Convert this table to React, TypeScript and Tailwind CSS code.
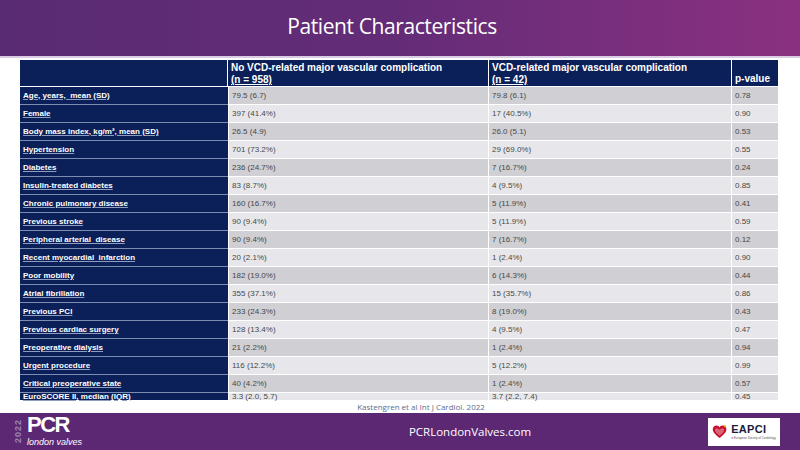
import React from "react";

type Row = { label: string; a: string; b: string; p: string };

const rows: Row[] = [
  { label: "Age, years,  mean (SD)", a: "79.5 (6.7)", b: "79.8 (6.1)", p: "0.78" },
  { label: "Female", a: "397 (41.4%)", b: "17 (40.5%)", p: "0.90" },
  { label: "Body mass index, kg/m², mean (SD)", a: "26.5 (4.9)", b: "26.0 (5.1)", p: "0.53" },
  { label: "Hypertension", a: "701 (73.2%)", b: "29 (69.0%)", p: "0.55" },
  { label: "Diabetes", a: "236 (24.7%)", b: "7 (16.7%)", p: "0.24" },
  { label: "Insulin-treated diabetes", a: "83 (8.7%)", b: "4 (9.5%)", p: "0.85" },
  { label: "Chronic pulmonary disease", a: "160 (16.7%)", b: "5 (11.9%)", p: "0.41" },
  { label: "Previous stroke", a: "90 (9.4%)", b: "5 (11.9%)", p: "0.59" },
  { label: "Peripheral arterial  disease", a: "90 (9.4%)", b: "7 (16.7%)", p: "0.12" },
  { label: "Recent myocardial  infarction", a: "20 (2.1%)", b: "1 (2.4%)", p: "0.90" },
  { label: "Poor mobility", a: "182 (19.0%)", b: "6 (14.3%)", p: "0.44" },
  { label: "Atrial fibrillation", a: "355 (37.1%)", b: "15 (35.7%)", p: "0.86" },
  { label: "Previous PCI", a: "233 (24.3%)", b: "8 (19.0%)", p: "0.43" },
  { label: "Previous cardiac surgery", a: "128 (13.4%)", b: "4 (9.5%)", p: "0.47" },
  { label: "Preoperative dialysis", a: "21 (2.2%)", b: "1 (2.4%)", p: "0.94" },
  { label: "Urgent procedure", a: "116 (12.2%)", b: "5 (12.2%)", p: "0.99" },
  { label: "Critical preoperative state", a: "40 (4.2%)", b: "1 (2.4%)", p: "0.57" },
  { label: "EuroSCORE II, median (IQR)", a: "3.3 (2.0, 5.7)", b: "3.7 (2.2, 7.4)", p: "0.45" },
];

function DataRow({ row, i }: { row: Row; i: number }) {
  const last = i === rows.length - 1;
  const bg = i % 2 === 0 ? "bg-[#cfcfd4]" : "bg-[#e7e7eb]";
  const h = last ? "h-[7px]" : "h-[17px]";
  const cell = `${bg} ${h} flex items-center pl-[3px] text-[8px] text-[#474747] whitespace-nowrap`;
  return (
    <div className="flex shrink-0">
      <div
        className={`w-[208px] shrink-0 bg-[#0b1f58] flex flex-col ${last ? "" : "border-b border-[#7d8db1]"}`}
      >
        <div className={`${h} flex items-center pl-[3px] text-[8px] font-bold text-white underline decoration-[#8e9cbf] whitespace-pre`}>
          {row.label}
        </div>
      </div>
      <div className={`flex flex-1 ${last ? "" : "border-b border-white"}`}>
        <div className={`w-[261px] ${cell} border-x border-white`}>{row.a}</div>
        <div className={`w-[243px] ${cell} border-r border-white`}>{row.b}</div>
        <div className={`w-[46px] ${cell}`}>{row.p}</div>
      </div>
    </div>
  );
}

function PcrLogo() {
  return (
    <div className="flex items-center gap-[4px]">
      <div className="text-[9px] font-bold tracking-[1px] text-[#9b84b3] rotate-180 leading-none [writing-mode:vertical-rl]">
        2022
      </div>
      <div className="flex flex-col">
        <span className="text-[22px] font-black text-white tracking-[-1.5px] leading-[18px]">PCR</span>
        <span className="text-[9px] italic text-white leading-[10px] mt-[3px]">london valves</span>
      </div>
    </div>
  );
}

function EapciLogo() {
  return (
    <div className="w-[72px] h-[28px] bg-white flex items-center gap-[4px] px-[4px]">
      <svg width="18" height="18" viewBox="0 0 20 20">
        <path d="M10 18 C4 13 1 10 1 6.5 C1 3.5 3.3 1.5 6 1.5 C7.8 1.5 9.2 2.5 10 4 C10.8 2.5 12.2 1.5 14 1.5 C16.7 1.5 19 3.5 19 6.5 C19 10 16 13 10 18 Z" fill="#c8102e" />
        <path d="M10 15 C6 12 4 10 4 7.5 C4 6 5 5 6.5 5 C8 5 9 6 10 7.5 C11 6 12 5 13.5 5 C15 5 16 6 16 7.5 C16 10 14 12 10 15 Z" fill="#fff" opacity="0.35" />
        <circle cx="17" cy="2.5" r="1.5" fill="#e6a800" />
      </svg>
      <div className="flex flex-col leading-none">
        <span className="text-[11px] font-bold text-[#1c1c3a] tracking-[0.3px]">EAPCI</span>
        <span className="text-[3px] text-[#555] mt-[2px] whitespace-nowrap">
          <span className="text-[#c8102e]">♥</span> European Society of Cardiology
        </span>
      </div>
    </div>
  );
}

export default function App() {
  return (
    <div className="w-[800px] h-[450px] bg-white flex flex-col overflow-hidden" style={{ fontFamily: "'Liberation Sans', Arial, sans-serif" }}>
      <div className="h-[58px] shrink-0 bg-gradient-to-r from-[#592b72] via-[#642c77] to-[#8b3081] flex items-center justify-center pr-[16px] border-b-2 border-[#d9cde4]">
        <h1 className="text-white text-[21px] tracking-[-0.4px] mt-[-3px]" style={{ fontFamily: "'Open Sans', sans-serif" }}>
          Patient Characteristics
        </h1>
      </div>

      <div className="flex flex-col shrink-0 pl-[20px] mt-[2px]">
        <div className="flex h-[26px] bg-[#0b1f58] w-[758px] text-white text-[10px] font-bold leading-[12px]">
          <div className="w-[208px] border-r border-white" />
          <div className="w-[261px] border-r border-white pl-[3px] pt-[2px]">
            <div>No VCD-related major vascular complication</div>
            <div className="underline">(n = 958)</div>
          </div>
          <div className="w-[243px] border-r border-white pl-[3px] pt-[2px]">
            <div>VCD-related major vascular complication</div>
            <div className="underline">(n = 42)</div>
          </div>
          <div className="w-[46px] pl-[3px] flex items-end pb-[1px]">p-value</div>
        </div>
        <div className="h-[1px] bg-white" />
        <div className="flex flex-col w-[758px]">
          {rows.map((r, i) => (
            <DataRow key={r.label} row={r} i={i} />
          ))}
        </div>
      </div>

      <div className="flex-1 flex justify-center items-start pl-[42px] pt-[1px]">
        <span className="text-[8px] text-[#5a6d8e]" style={{ fontFamily: "'Open Sans', sans-serif" }}>
          Kastengren et al Int J Cardiol. 2022
        </span>
      </div>

      <div className="h-[37px] shrink-0 bg-[#5c2874] flex items-center justify-between pl-[14px] pr-[20px]">
        <PcrLogo />
        <span className="text-white text-[11.5px] ml-[150px]" style={{ fontFamily: "'Open Sans', sans-serif" }}>
          PCRLondonValves.com
        </span>
        <EapciLogo />
      </div>
    </div>
  );
}
